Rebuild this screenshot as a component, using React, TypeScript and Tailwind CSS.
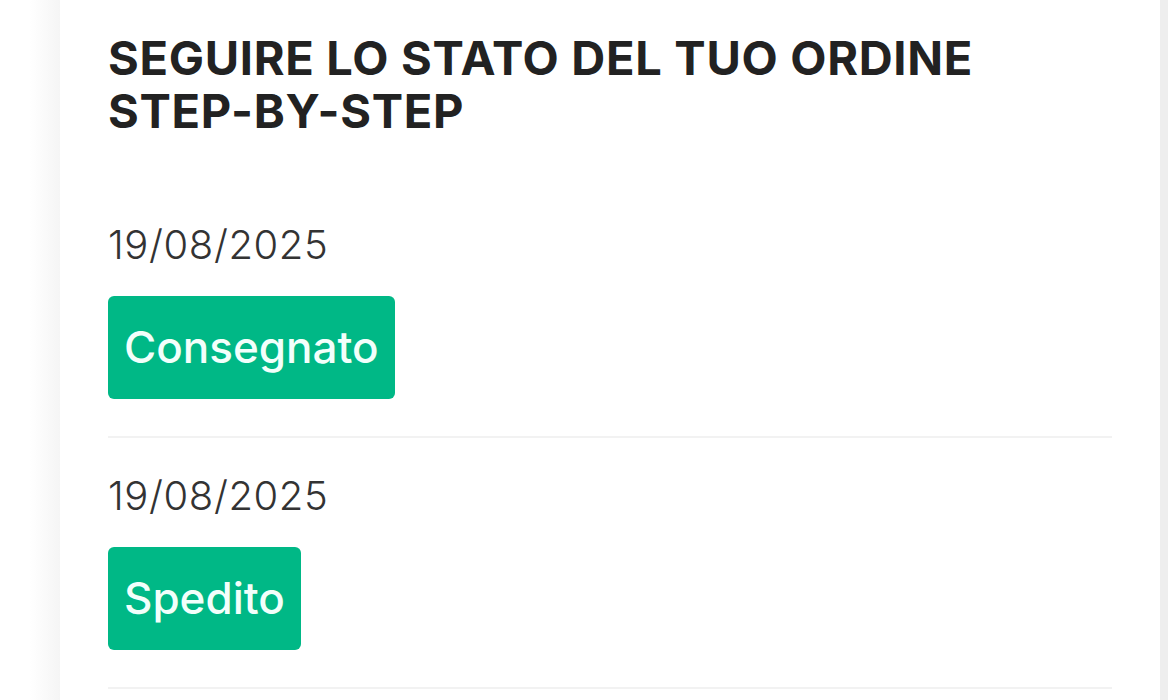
import React from 'react';

const steps = [
  { date: '19/08/2025', label: 'Consegnato' },
  { date: '19/08/2025', label: 'Spedito' },
];

const App: React.FC = () => {
  return (
    <div className="w-[1168px] h-[700px] overflow-hidden bg-white flex" style={{ fontFamily: 'Inter, "Noto Sans", sans-serif' }}>
      <div className="w-[60px] shrink-0 bg-gradient-to-r from-white via-white to-[#f5f5f5]" />
      <div className="w-[1100px] shrink-0 bg-white px-12 pt-[31px]">
        <h2 className="text-[47px] leading-[53px] font-bold uppercase text-[#222] tracking-[0.7px]">
          Seguire lo stato del tuo ordine
          <br />
          step-by-step
        </h2>

        <div className="mt-[84px] flex flex-col">
          {steps.map((step, i) => (
            <div
              key={i}
              className={`flex flex-col items-start border-b-2 border-[#f2f2f2] pb-[37px] ${i > 0 ? 'pt-[34px]' : ''}`}
            >
              <p className="text-[40px] leading-[48px] font-light text-[#333] tracking-[0.6px]">{step.date}</p>
              <span className="mt-[27px] block rounded-md bg-[#00b886] px-[16px] py-[24px] text-[44px] leading-[55px] font-medium text-[#f2fffb]">
                {step.label}
              </span>
            </div>
          ))}
        </div>
      </div>
      <div className="w-2 shrink-0 bg-[#eeeeee]" />
    </div>
  );
};

export default App;
